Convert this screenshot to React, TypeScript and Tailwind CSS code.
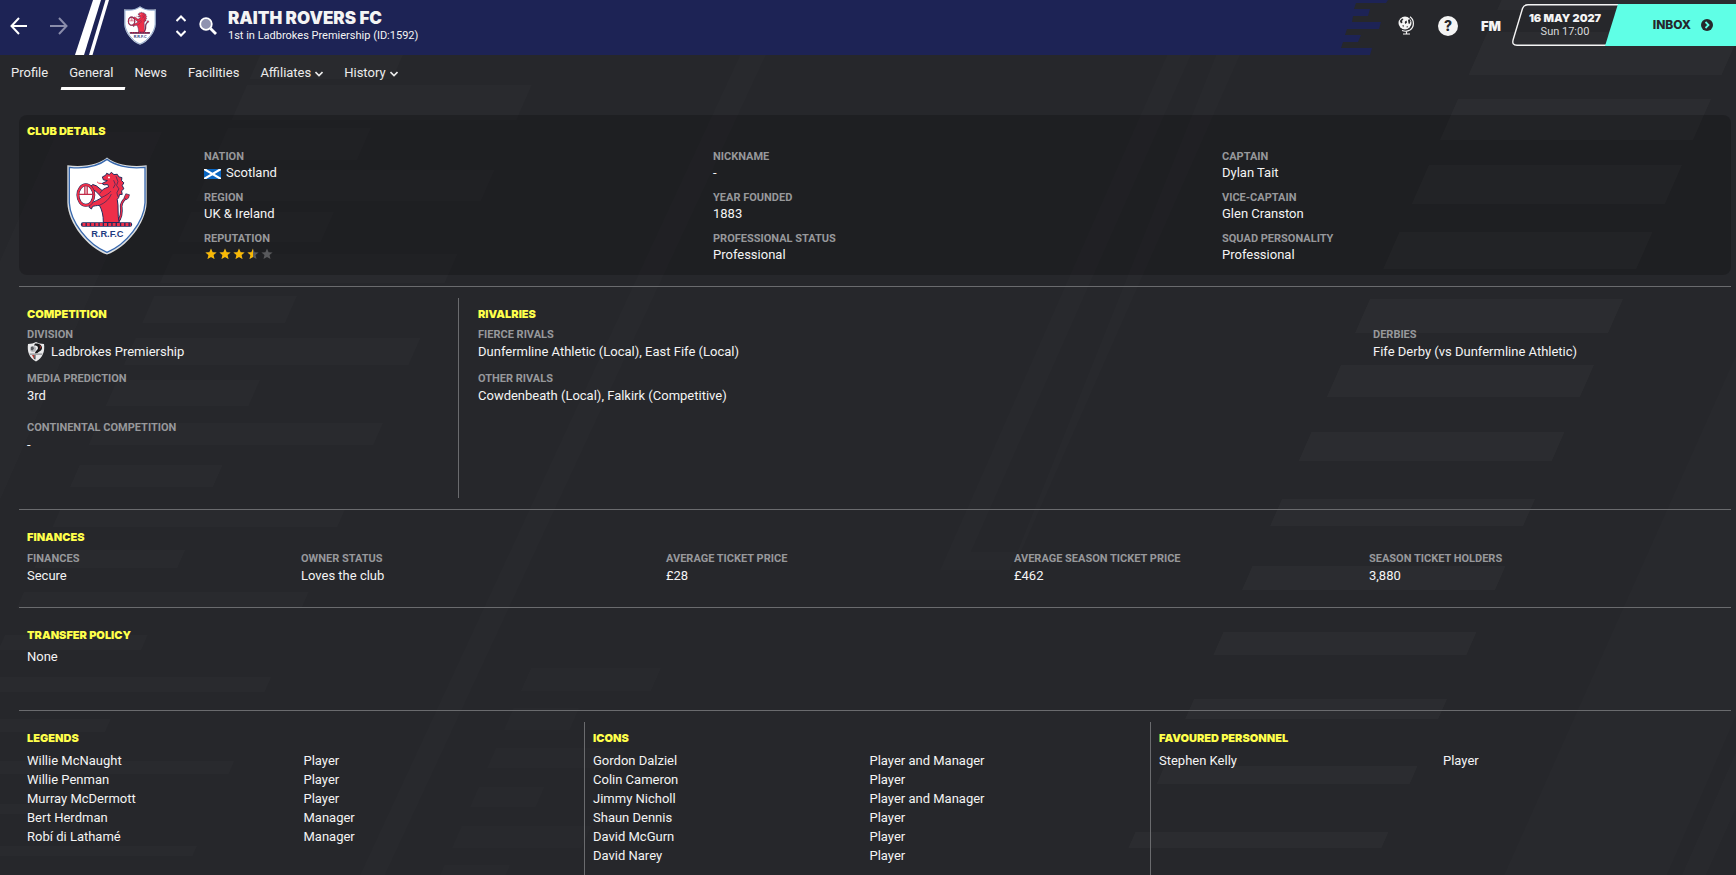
import type { ReactNode } from 'react'
import clsx from 'clsx'

const rivalFields = [
  { label: 'Fierce Rivals', value: 'Dunfermline Athletic (Local), East Fife (Local)' },
  { label: 'Other Rivals', value: 'Cowdenbeath (Local), Falkirk (Competitive)' },
]

const financeFields = [
  { label: 'Finances', value: 'Secure' },
  { label: 'Owner Status', value: 'Loves the club' },
  { label: 'Average Ticket Price', value: '£28' },
  { label: 'Average Season Ticket Price', value: '£462' },
  { label: 'Season Ticket Holders', value: '3,880' },
]

const people = [
  {
    title: 'Legends',
    rows: [
      ['Willie McNaught', 'Player'],
      ['Willie Penman', 'Player'],
      ['Murray McDermott', 'Player'],
      ['Bert Herdman', 'Manager'],
      ['Robí di Lathamé', 'Manager'],
    ],
  },
  {
    title: 'Icons',
    rows: [
      ['Gordon Dalziel', 'Player and Manager'],
      ['Colin Cameron', 'Player'],
      ['Jimmy Nicholl', 'Player and Manager'],
      ['Shaun Dennis', 'Player'],
      ['David McGurn', 'Player'],
      ['David Narey', 'Player'],
    ],
  },
  { title: 'Favoured Personnel', rows: [['Stephen Kelly', 'Player']] },
]

const tabs = [
  { label: 'Profile' },
  { label: 'General', active: true },
  { label: 'News' },
  { label: 'Facilities' },
  { label: 'Affiliates', menu: true },
  { label: 'History', menu: true },
]

// [top, height] of each slanted bar
const rightBars = [
  [-34, 44], [32, 43], [99, 41], [165, 39], [232, 37], [299, 34], [365, 32],
  [432, 29], [499, 27], [566, 24], [632, 23], [699, 20], [766, 18], [832, 16],
]
const leftBars = [
  [43, 36], [85, 35], [128, 32], [170, 31], [212, 30], [254, 29], [296, 27],
  [338, 27], [380, 26], [423, 22], [465, 22], [509, 18], [550, 18], [592, 16],
  [635, 15], [677, 15], [719, 13], [761, 13], [804, 10], [846, 10],
]
const middleBars = [
  [668, 23], [708, 22], [748, 20], [787, 20], [826, 22], [865, 10],
]

function bar(x: number, y: number, w: number, h: number) {
  const dx = h * 0.44
  return `${x},${y} ${x + w},${y} ${x + w - dx},${y + h} ${x - dx},${y + h}`
}

function Backdrop() {
  return (
    <svg
      className="absolute inset-0 w-full h-full"
      viewBox="0 0 1736 875"
      preserveAspectRatio="xMinYMin slice"
      aria-hidden="true"
    >
      <g fill="#fff" fillOpacity="0.012">
        <polygon points="57,132 162,132 0,500 0,261" />
        <polygon points="740,55 766,55 385,875 360,875" />
        <polygon points="1167,55 1191,55 971,552 1021,552 1240,55 1216,55 1010,570 940,570" />
        <polygon points="1736,355 1736,716 1667,875 1504,875" />
        <polygon points="1736,752 1736,808 1706,875 1682,875" />
        {middleBars.map(([y, h], i) => (
          <polygon key={y} points={bar(531 - (y - 668) * 0.44, y, i % 2 ? 66 : 130, h)} />
        ))}
      </g>
      <g fill="#fff" fillOpacity="0.016">
        {leftBars.map(([y, h], i) => (
          <polygon key={y} points={bar(154 - (y - 296) * 0.44, y, i % 2 ? 285 : 143, h)} />
        ))}
      </g>
      <g fill="#fff" fillOpacity="0.027">
        {rightBars.map(([y, h]) => (
          <polygon key={y} points={bar(1458 - (y - 99) * 0.44, y, 253, h)} />
        ))}
      </g>
    </svg>
  )
}

function ClubCrest({ className }: { className?: string }) {
  return (
    <svg viewBox="50 50 242 296" className={className} role="img" aria-label="Raith Rovers crest">
      <path
        d="M171 51C150 68 112 82 51 75V188C53 250 112 324 171 345C230 324 289 250 291 188V75C232 82 192 68 171 51Z"
        fill="#dcdedf"
      />
      <path
        d="M171 57C150 73 112 87 57 81V188C60 246 114 316 171 338C228 316 283 246 286 188V81C232 87 192 73 171 57Z"
        fill="#fff"
        stroke="#3768ae"
        strokeWidth="4"
      />
      {/* tail */}
      <path d="M203 246C216 232 216 216 214 200C213 186 222 180 229 172" fill="none" stroke="#1f2a5c" strokeWidth="8" />
      <path d="M203 246C216 232 216 216 214 200C213 186 222 180 229 172" fill="none" stroke="#ee2f49" strokeWidth="4" />
      <path d="M223 172L228 161L239 164L236 174L229 179Z" fill="#ee2f49" stroke="#1f2a5c" strokeWidth="2" />
      {/* lion */}
      <path
        d="M157 110L167 105L170 99L178 103L184 96L192 103L202 102L207 110L216 112L215 121L222 128L217 136L222 146L215 152L217 163L209 163L206 173L202 178C207 200 202 226 208 248H160C160 226 156 210 148 196C140 197 132 197 127 200L124 207L117 202L116 193L124 189C132 184 146 180 155 172L149 166C142 156 132 150 124 146L121 139L128 133L139 137L156 151C162 145 169 143 176 140L173 133L162 134L156 130L166 125L172 121L160 119Z"
        fill="#ee2f49"
        stroke="#1f2a5c"
        strokeWidth="3"
        strokeLinejoin="round"
      />
      <path
        d="M155 172C168 166 178 160 183 153M148 196C166 188 178 178 184 162M198 108L204 124L200 136L207 146L201 158L204 170M191 120L196 132L190 144M156 151L149 160"
        fill="none"
        stroke="#1f2a5c"
        strokeWidth="2"
      />
      <path d="M156 130L146 129L141 125" fill="none" stroke="#ee2f49" strokeWidth="3" />
      <circle cx="177" cy="112" r="3" fill="#fff" />
      {/* wheel */}
      <ellipse cx="107" cy="165" rx="24" ry="31" fill="none" stroke="#1f2a5c" strokeWidth="9" />
      <ellipse cx="107" cy="165" rx="24" ry="31" fill="none" stroke="#ee2f49" strokeWidth="6" />
      <path d="M84 163H131M104 136V163M111 136V163" stroke="#c22a48" strokeWidth="4" />
      {/* rope */}
      <rect x="92" y="247" width="155" height="14" rx="6" fill="#1f2a5c" />
      <path d="M97 254H243" stroke="#ee2f49" strokeWidth="9" strokeDasharray="9 4" />
      <text
        x="172"
        y="291"
        textAnchor="middle"
        fontFamily="Liberation Sans, sans-serif"
        fontWeight="700"
        fontSize="28"
        fill="#1f3c80"
      >
        R.R.F.C
      </text>
    </svg>
  )
}

function LeagueBadge() {
  return (
    <svg viewBox="0 0 18 20" className="w-[18px] h-5 shrink-0" aria-hidden="true">
      <path d="M1 2C4 2 7 1 9 0C11 1 14 2 17 2C18 9 16 16 9 19.500C2 16 0 9 1 2Z" fill="#e9e9ea" />
      <path d="M8 1.500C12 1 15 3 15 6C15 8.500 12.500 9 10.500 11L8 11.500C8 9 11 8 11 6C11 4 9.500 3.500 7 3.500Z" fill="#17181b" />
      <circle cx="6" cy="7" r="3" fill="#b5b7ba" />
      <path d="M4 5L6 4.500L7 6.500L5.500 8.500L4 8Z" fill="#55575c" />
      <path d="M12.500 2.500L14 5L12.500 8L13 5Z" fill="#b7352d" />
      <path d="M2.500 11.500H15.500L15 12.800H3Z" fill="#8b8d91" />
      <path d="M5 13L7.500 13L7 17Z" fill="#b7352d" />
      <path d="M7.500 13H8.500V17.500L7 17Z" fill="#3d3f44" />
    </svg>
  )
}

function SaltireFlag() {
  return (
    <svg viewBox="0 0 17 10" className="mt-0.5 w-[17px] h-2.5 shrink-0" aria-hidden="true">
      <rect width="17" height="10" fill="#0b66c1" />
      <path d="M0 0L17 10M17 0L0 10" stroke="#fff" strokeWidth="2.200" />
    </svg>
  )
}

const starPath = 'M6 0.500L7.600 4.200L11.600 4.500L8.500 7.100L9.500 11L6 8.900L2.500 11L3.500 7.100L0.400 4.500L4.400 4.200Z'

function Stars({ rating }: { rating: number }) {
  return (
    <span className="flex gap-0.5 pl-px pb-0.5" role="img" aria-label={`${rating} out of 5`}>
      {[0, 1, 2, 3, 4].map((i) => (
        <svg key={i} viewBox="0 0 12 12" className="size-3">
          <path d={starPath} fill="#58595c" />
          {rating > i && (
            <path
              d={rating >= i + 1 ? starPath : 'M6 0.500V8.900L2.500 11L3.500 7.100L0.400 4.500L4.400 4.200Z'}
              fill="#f9b905"
            />
          )}
        </svg>
      ))}
    </span>
  )
}

function SectionTitle({ children }: { children: ReactNode }) {
  return (
    <h2 className="font-[Inter,sans-serif] text-[11px] leading-4 font-black uppercase text-[#ffff4b]">
      {children}
    </h2>
  )
}

function Field({ label, children, compact }: { label: string; children: ReactNode; compact?: boolean }) {
  return (
    <div>
      <dt className="text-[11px] leading-4 font-bold uppercase text-[#97989b]">{label}</dt>
      <dd className={clsx('flex items-center', compact ? 'h-4' : 'h-[18px]')}>{children}</dd>
    </div>
  )
}

function TopBar() {
  return (
    <header className="relative flex h-[55px]">
      <div className="flex flex-1 items-center bg-[#1d2355] pl-2.5">
        <button aria-label="Back" className="mr-[22px] mb-1">
          <svg viewBox="0 0 18 18" className="size-[18px]" fill="none" stroke="#fff" strokeWidth="2">
            <path d="M17 9H2M9 1L1.500 9L9 17" />
          </svg>
        </button>
        <button aria-label="Forward" className="mb-1">
          <svg viewBox="0 0 18 18" className="size-[18px]" fill="none" stroke="#8a8dab" strokeWidth="2">
            <path d="M0 9H16M9 1L16.500 9L9 17" />
          </svg>
        </button>
        <svg viewBox="0 0 35 55" className="ml-[7px] w-[35px] h-[55px]" aria-hidden="true">
          <path d="M18 0H26L9 55H0Z" fill="#fff" />
          <path d="M30.500 0H34L17.500 55H14Z" fill="#fff" />
        </svg>
        <ClubCrest className="mb-1 ml-3.5 w-8 h-[39px]" />
        <div className="mb-1 ml-5 flex flex-col gap-2">
          <button aria-label="Previous club">
            <svg viewBox="0 0 10 7" className="w-2.5 h-[7px]" fill="none" stroke="#fff" strokeWidth="2">
              <path d="M0.500 6L5 1.500L9.500 6" />
            </svg>
          </button>
          <button aria-label="Next club">
            <svg viewBox="0 0 10 7" className="w-2.5 h-[7px]" fill="none" stroke="#fff" strokeWidth="2">
              <path d="M0.500 1L5 5.500L9.500 1" />
            </svg>
          </button>
        </div>
        <button aria-label="Search" className="mb-1 ml-[13px]">
          <svg viewBox="0 0 18 18" className="size-[18px]">
            <circle cx="7" cy="7" r="5.800" fill="#8f92b0" stroke="#fff" strokeWidth="1.800" />
            <path d="M11.500 11.500L17 17" stroke="#fff" strokeWidth="2.800" />
          </svg>
        </button>
        <div className="mb-1 ml-[11px]">
          <h1 className="font-[Inter,sans-serif] text-[17px] leading-5 font-black">RAITH ROVERS FC</h1>
          <p className="text-[11px] leading-4">1st in Ladbrokes Premiership (ID:1592)</p>
        </div>
      </div>
      <svg viewBox="0 0 48 55" className="w-12 h-[55px]" fill="#1d2355" aria-hidden="true">
        <path d="M0 0H48L46 3H16L14 9H30L28 16H13L12 22H41L39 29H7L5 35H21L18 42H3L1 48H32L30 55H0Z" />
      </svg>
      <div className="flex items-center pb-1">
        <button aria-label="World" className="ml-2.5">
          <svg viewBox="0 0 17 19" className="w-[17px] h-[19px]" fill="none" stroke="#f4f4f4">
            <circle cx="7" cy="7" r="6.500" fill="#f4f4f4" stroke="none" />
            <path
              d="M1.800 5L4 2.500L5.500 3L4 5L4.500 6.500L3 7.500ZM7 5.500L8.500 4.500L9 6.500L7.500 8L6.800 7ZM10 4L11.500 3L12.500 5.500L11.500 8L10.500 7.500ZM4.500 9L6 9.500L5 11.500ZM8.500 10.500L10 10L9 12Z"
              fill="#26272b"
              stroke="none"
            />
            <path d="M12 0.800C16.500 4 16.500 11 12 14C9.500 15.500 6.500 15.500 4 14.500M8.500 15V18M5 18H12" strokeWidth="1.200" />
          </svg>
        </button>
        <button
          aria-label="Help"
          className="mx-[23px] size-5 rounded-full bg-[#f4f4f4] font-[Inter,sans-serif] text-sm leading-5 font-extrabold text-[#26272b]"
        >
          ?
        </button>
        <button className="font-[Inter,sans-serif] text-[13px] leading-4 font-black text-[#f4f4f4]">FM</button>
      </div>
      <div className="ml-[11px] mt-1 flex h-[42px]">
        <div className="relative w-[106px] pt-1.5 text-center">
          <svg viewBox="0 0 106 42" className="absolute inset-0 w-full h-full" aria-hidden="true">
            <path
              d="M106 0.700H16C13 0.700 11.500 1.500 10.500 4.500L1.200 35.500C0 39.500 1.500 41.300 5 41.300H94"
              fill="none"
              stroke="#f4f4f4"
              strokeWidth="1.400"
            />
          </svg>
          <p className="relative font-[Inter,sans-serif] text-[11px] leading-4 font-black">16 MAY 2027</p>
          <p className="relative text-[11px] leading-3 text-[#d9dadb]">Sun 17:00</p>
        </div>
        <button className="-ml-[13px] flex w-[131px] items-center justify-end gap-2.5 bg-[#5fffe6] pr-[23px] font-[Inter,sans-serif] text-xs font-extrabold text-[#26272b] [clip-path:polygon(13px_0,100%_0,100%_100%,0_100%)]">
          INBOX
          <svg viewBox="0 0 12 12" className="size-3">
            <circle cx="6" cy="6" r="6" fill="#26272b" />
            <path d="M4.500 3L7.500 6L4.500 9" fill="none" stroke="#5fffe6" strokeWidth="1.800" />
          </svg>
        </button>
      </div>
    </header>
  )
}

function Tabs() {
  return (
    <nav className="relative flex gap-px pl-[3px]">
      {tabs.map((tab) => (
        <a key={tab.label} href="#" className="relative flex h-[35px] items-center pl-2 pr-3 text-[#ececec]">
          {tab.label}
          {tab.menu && (
            <svg viewBox="0 0 8 6" className="ml-1 mt-0.5 w-2 h-1.5" fill="none" stroke="#ececec" strokeWidth="1.600">
              <path d="M0.500 1L4 4.500L7.500 1" />
            </svg>
          )}
          <span className={clsx('absolute inset-x-0 bottom-0 h-[3px] -skew-x-12', tab.active && 'bg-white')} />
        </a>
      ))}
    </nav>
  )
}

export default function App() {
  return (
    <div className="relative flex min-h-screen flex-col overflow-hidden bg-[#26272b] font-[Roboto,sans-serif] text-[13px] text-[#f4f4f4]">
      <Backdrop />
      <TopBar />
      <Tabs />

      <main className="relative mt-[25px] flex flex-1 flex-col pl-[19px] pr-[5px]">
        {/* Club details */}
        <section className="rounded-lg bg-black/20 pt-2 pb-3">
          <div className="pl-2">
            <SectionTitle>Club Details</SectionTitle>
          </div>
          <div className="mt-2.5 flex">
            <div className="w-[185px] shrink-0 pl-12 pt-2">
              <ClubCrest className="w-20 h-[98px]" />
            </div>
            <dl className="grid flex-1 grid-flow-col grid-cols-3 grid-rows-3 gap-y-[9px]">
              <Field compact label="Nation">
                <SaltireFlag />
                <span className="ml-[5px]">Scotland</span>
              </Field>
              <Field compact label="Region">UK &amp; Ireland</Field>
              <Field compact label="Reputation">
                <Stars rating={3.5} />
              </Field>
              <Field compact label="Nickname">-</Field>
              <Field compact label="Year Founded">1883</Field>
              <Field compact label="Professional Status">Professional</Field>
              <Field compact label="Captain">Dylan Tait</Field>
              <Field compact label="Vice-Captain">Glen Cranston</Field>
              <Field compact label="Squad Personality">Professional</Field>
            </dl>
          </div>
        </section>

        {/* Competition and rivalries */}
        <section className="mt-[11px] border-t border-[#6a6b6e] py-[11px]">
          <div className="flex min-h-[200px]">
            <div className="w-[440px] border-r border-[#6a6b6e] pl-2 pt-2">
              <SectionTitle>Competition</SectionTitle>
              <dl className="mt-[5px] flex flex-col gap-2.5">
                <Field label="Division">
                  <LeagueBadge />
                  <span className="ml-1.5">Ladbrokes Premiership</span>
                </Field>
                <Field label="Media Prediction">3rd</Field>
                <div className="pt-[5px]">
                  <Field label="Continental Competition">-</Field>
                </div>
              </dl>
            </div>
            <div className="flex-1 pl-[19px] pt-2">
              <SectionTitle>Rivalries</SectionTitle>
              <div className="mt-[5px] grid grid-cols-[5fr_2fr]">
                <dl className="flex flex-col gap-2.5">
                  {rivalFields.map((f) => (
                    <Field key={f.label} label={f.label}>{f.value}</Field>
                  ))}
                </dl>
                <dl>
                  <Field label="Derbies">Fife Derby (vs Dunfermline Athletic)</Field>
                </dl>
              </div>
            </div>
          </div>
        </section>

        {/* Finances */}
        <section className="border-t border-[#6a6b6e] pl-2 pt-[19px] pb-[22px]">
          <SectionTitle>Finances</SectionTitle>
          <dl className="mt-1.5 grid grid-cols-[274fr_365fr_348fr_355fr_362fr]">
            {financeFields.map((f) => (
              <Field key={f.label} label={f.label}>{f.value}</Field>
            ))}
          </dl>
        </section>

        {/* Transfer policy */}
        <section className="border-t border-[#6a6b6e] pl-2 pt-[19px] pb-[45px]">
          <SectionTitle>Transfer Policy</SectionTitle>
          <p className="mt-1.5 leading-4">None</p>
        </section>

        {/* Legends, icons, favoured personnel */}
        <section className="grid flex-1 grid-cols-[565fr_566fr_581fr] border-t border-[#6a6b6e] pt-[11px]">
          {people.map((group, i) => (
            <div key={group.title} className={clsx('pl-2 pr-1 pt-2', i > 0 && 'border-l border-[#6a6b6e]')}>
              <SectionTitle>{group.title}</SectionTitle>
              <table className="mt-[5px] w-full table-fixed" aria-label={group.title}>
                <tbody>
                  {group.rows.map(([name, role]) => (
                    <tr key={name} className="leading-[19px]">
                      <td>{name}</td>
                      <td>{role}</td>
                    </tr>
                  ))}
                </tbody>
              </table>
            </div>
          ))}
        </section>
      </main>
    </div>
  )
}
